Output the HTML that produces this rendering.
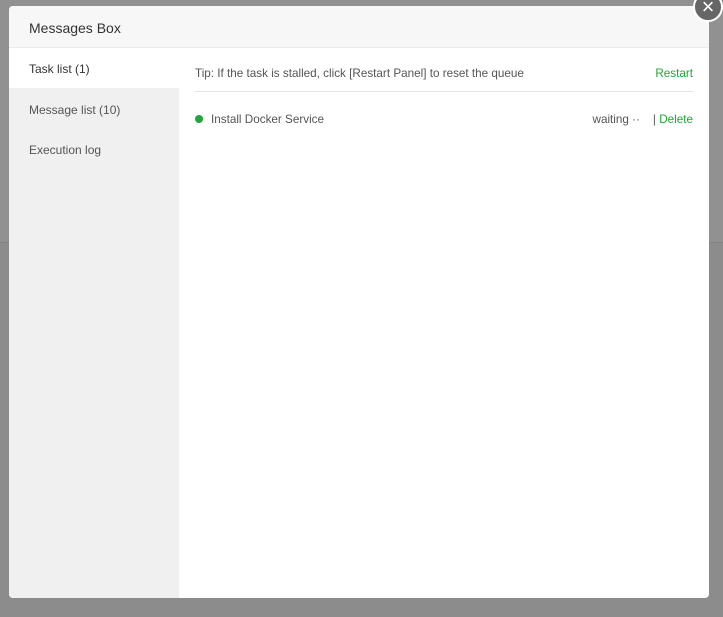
<!DOCTYPE html>
<html><head><meta charset="utf-8"><style>
*{margin:0;padding:0;box-sizing:border-box}
body{width:723px;height:617px;background:#8c8c8c;position:relative;overflow:hidden;font-family:"Liberation Sans",sans-serif;}
.topbg{position:absolute;left:0;top:0;width:723px;height:243px;background:#919191;border-bottom:1px solid #858585}
.dlg{position:absolute;left:9px;top:6px;width:700px;height:592px;background:#fff;border-radius:4px;overflow:hidden}
.hd{height:42px;background:#f7f7f7;border-bottom:1px solid #ebebeb;font-size:14px;color:#333;padding:14px 0 0 20px}
.side{position:absolute;left:0;top:42px;width:170px;bottom:0;background:#f0f0f0}
.side div{height:40px;font-size:12px;color:#555;padding:15px 0 0 20px}
.side .on{background:#fff;color:#333;padding-top:14px}
.main{position:absolute;left:186px;top:42px;right:16px}
.tip{height:44px;border-bottom:1px solid #e3e3e3;font-size:11.7px;color:#555;padding-top:19px;position:relative}
.g{color:#20a53a}
.r{position:absolute;right:0}
.row{position:relative;font-size:11.7px;color:#555;padding-top:21px}
.dot{display:inline-block;width:8px;height:8px;border-radius:50%;background:#20a53a;margin-right:8px;vertical-align:0}
.x{position:absolute;left:693px;top:-8px;width:30px;height:30px;border-radius:50%;background:#666;border:2px solid #fff;color:#fff;font-size:22px;line-height:26px;text-align:center}
</style></head><body>
<div class="topbg"></div>
<div class="dlg">
<div class="hd">Messages Box</div>
<div class="side"><div class="on">Task list (1)</div><div>Message list (10)</div><div>Execution log</div></div>
<div class="main">
<div class="tip">Tip: If the task is stalled, click [Restart Panel] to reset the queue<span class="r g">Restart</span></div>
<div class="row"><span class="dot"></span>Install Docker Service<span class="r">waiting ··&nbsp;&nbsp;&nbsp;&nbsp;| <span class="g">Delete</span></span></div>
</div>
</div>
<div class="x">×</div>
</body></html>
